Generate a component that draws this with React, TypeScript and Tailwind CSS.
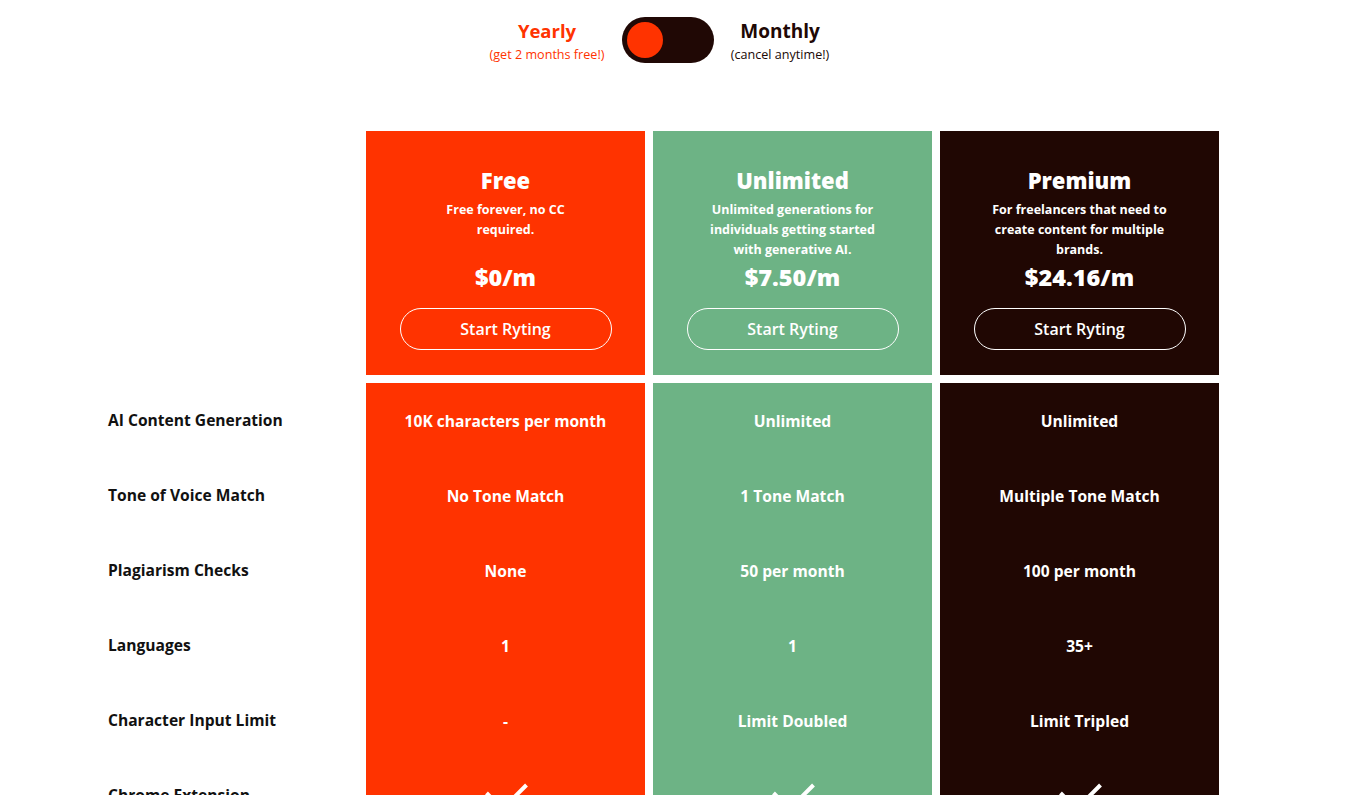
import React from "react";

const plans = [
  {
    name: "Free",
    desc: "Free forever, no CC required.",
    price: "$0/m",
    bg: "bg-[#ff3300]",
    values: ["10K characters per month", "No Tone Match", "None", "1", "-"],
  },
  {
    name: "Unlimited",
    desc: "Unlimited generations for individuals getting started with generative AI.",
    price: "$7.50/m",
    bg: "bg-[#6db385]",
    values: ["Unlimited", "1 Tone Match", "50 per month", "1", "Limit Doubled"],
  },
  {
    name: "Premium",
    desc: "For freelancers that need to create content for multiple brands.",
    price: "$24.16/m",
    bg: "bg-[#200703]",
    values: ["Unlimited", "Multiple Tone Match", "100 per month", "35+", "Limit Tripled"],
  },
];

const features = [
  "AI Content Generation",
  "Tone of Voice Match",
  "Plagiarism Checks",
  "Languages",
  "Character Input Limit",
  "Chrome Extension",
];

function Check() {
  return (
    <svg width="48" height="32" viewBox="0 0 48 32" fill="none">
      <polyline points="4.5,12 20.5,28 44.5,4" stroke="white" strokeWidth="4" />
    </svg>
  );
}

export default function App() {
  return (
    <div
      className="w-[1352px] h-[795px] overflow-hidden bg-white text-[#111]"
      style={{ fontFamily: '"Open Sans", "Noto Sans", sans-serif' }}
    >
      <div className="flex items-center pl-[482px] pt-[17px] h-[63px]">
        <div className="flex flex-col items-center w-[130px] mr-[10px]">
          <div className="text-[18.5px] leading-[28px] font-bold text-[#ff3300]">Yearly</div>
          <div className="text-[12.6px] leading-[16px] text-[#ff3300] mt-[2px] whitespace-nowrap">(get 2 months free!)</div>
        </div>
        <div className="w-[92px] h-[46px] rounded-full bg-[#200805] flex items-center px-[5px]">
          <div className="w-[36px] h-[36px] rounded-full bg-[#ff3300]" />
        </div>
        <div className="flex flex-col items-center w-[132px]">
          <div className="text-[19px] leading-[28px] font-bold text-[#200805]">Monthly</div>
          <div className="text-[12.6px] leading-[16px] text-[#200805] mt-[2px] whitespace-nowrap">(cancel anytime!)</div>
        </div>
      </div>

      <div className="flex pl-[108px] mt-[68px]">
        <div className="w-[258px] flex-none flex flex-col">
          <div className="h-[252px]" />
          {features.map((f) => (
            <div key={f} className="h-[75px] flex items-center text-[15.6px] font-bold text-[#111]">
              {f}
            </div>
          ))}
        </div>
        <div className="flex gap-[8px]">
          {plans.map((p) => (
            <div key={p.name} className="w-[279px] flex flex-col gap-[8px]">
              <div className={`${p.bg} h-[244px] flex flex-col items-center text-white pt-[35px]`}>
                <div className="text-[22px] leading-[28px] font-black">{p.name}</div>
                <div className="h-[62px] max-w-[176px] text-center text-[12.5px] leading-[20px] font-bold mt-[6px]">
                  {p.desc}
                </div>
                <div className="text-[23.5px] leading-[30px] font-black">{p.price}</div>
                <button className="mt-[16px] w-[212px] h-[42px] rounded-full border border-white text-[16px] font-semibold text-white">
                  Start Ryting
                </button>
              </div>
              <div className={`${p.bg} h-[460px] flex flex-col text-white pt-[1px]`}>
                {p.values.map((v, i) => (
                  <div key={i} className="h-[75px] flex items-center justify-center text-[15.6px] font-bold">
                    {v}
                  </div>
                ))}
                <div className="h-[75px] flex items-center justify-center">
                  <Check />
                </div>
              </div>
            </div>
          ))}
        </div>
      </div>
    </div>
  );
}
